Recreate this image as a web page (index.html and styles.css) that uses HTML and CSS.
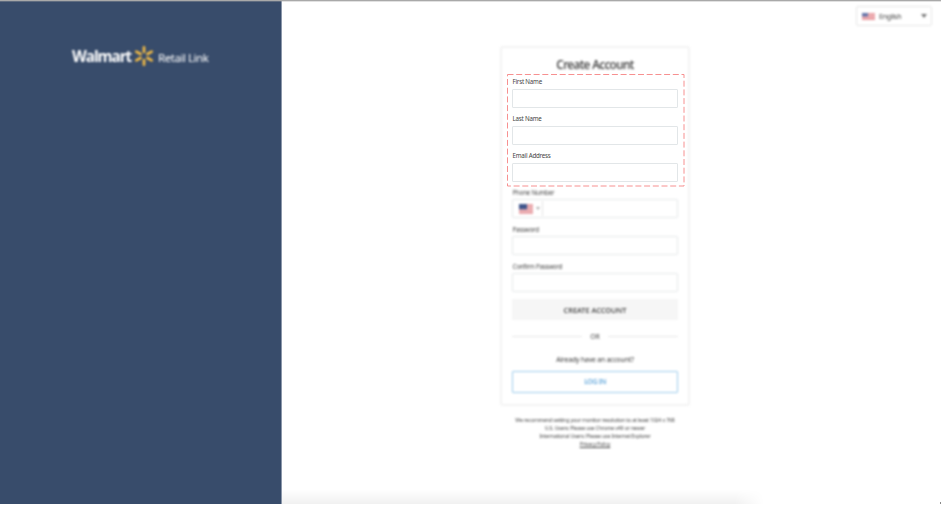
FILE: index.html
```html
<!DOCTYPE html>
<html lang="en">
<head>
<meta charset="utf-8">
<title>Create Account</title>
<link rel="stylesheet" href="styles.css">
</head>
<body>
<div class="page">
  <aside class="sidebar">
    <div class="brand">
      <span class="brand-name">Walmart</span>
      <svg class="spark" viewBox="0 0 20 20"><g stroke="#f3bb45" stroke-width="2.7" stroke-linecap="round"><path d="M10 1.3V6M10 14v4.7M2.3 5.6l4.2 2.4M13.5 12l4.2 2.4M2.3 14.4L6.5 12M13.5 8l4.2-2.4"/></g></svg>
      <span class="brand-product">Retail Link</span>
    </div>
  </aside>
  <main class="content">
    <div class="language soft">
      <svg class="flag" viewBox="0 0 13 8" preserveAspectRatio="none"><path fill="#e89a9e" d="M0 0h13v8H0z"/><path stroke="#f2c5c7" stroke-width=".6" d="M0 1.5h13M0 3h13M0 4.5h13M0 6h13"/><path fill="#6475aa" d="M0 0h6v4H0z"/></svg>
      <span class="language-name">English</span>
      <span class="arrow"></span>
    </div>
    <form class="card">
      <h1 class="title soft">Create Account</h1>
      <div class="group">
        <svg class="outline" viewBox="0 0 178 113"><path stroke="#f79090" stroke-dasharray="6 2.7" fill="none" d="M.5.5h176.500v111.500H.5z"/></svg>
        <div class="field"><label>First Name</label><div class="input"></div></div>
        <div class="field"><label>Last Name</label><div class="input"></div></div>
        <div class="field"><label>Email Address</label><div class="input"></div></div>
      </div>
      <div class="soft">
        <div class="field"><label>Phone Number</label>
          <div class="input phone">
            <svg class="flag" viewBox="0 0 13 10" preserveAspectRatio="none"><path fill="#e9a4a8" d="M0 0h13v10H0z"/><path stroke="#efc3c5" stroke-width=".6" d="M0 2h13M0 4h13M0 6h13M0 8h13"/><path fill="#3f558c" d="M0 0h7.500v5.300H0z"/></svg>
            <span class="arrow small"></span><span class="divider"></span>
          </div>
        </div>
        <div class="field"><label>Password</label><div class="input"></div></div>
        <div class="field"><label>Confirm Password</label><div class="input"></div></div>
        <div class="submit">CREATE ACCOUNT</div>
        <div class="or"><span>OR</span></div>
        <div class="question">Already have an account?</div>
        <div class="login">LOG IN</div>
      </div>
    </form>
    <footer class="notes soft">
      <div>We recommend setting your monitor resolution to at least 1024 x 768</div>
      <div>U.S. Users: Please use Chrome v49 or newer</div>
      <div>International Users: Please use Internet Explorer</div>
      <div><u>Privacy Policy</u></div>
    </footer>
    <div class="shade"></div>
  </main>
  <i class="corner"></i>
</div>
</body>
</html>
```
FILE: styles.css
```css
* { box-sizing: border-box; }
body { margin: 0; background: #fff; font-family: "Noto Sans", "Open Sans", sans-serif; font-size: 6.2px; color: #444; }
.page { position: relative; display: flex; width: 941px; height: 505px; overflow: hidden; border-top: 1px solid #a9a9a9; }
.page::before { content: ""; position: absolute; top: 0; left: 0; right: 0; height: 1px; background: rgba(170, 170, 170, .35); }
.soft { filter: blur(.8px); }
.sidebar { width: 282px; height: 503px; background: #384c6b; border-right: 1px solid #8b97aa; }
.brand { display: flex; align-items: center; height: 22px; margin: 44px 0 0 72px; color: #fff; white-space: nowrap; filter: blur(.8px); }
.brand-name { width: 59px; font: bold 15.3px/22px "Open Sans", sans-serif; letter-spacing: -1.05px; }
.spark { width: 20px; height: 20px; margin: 0 4px 0 3px; }
.brand-product { font: 11.5px/22px "Noto Sans", sans-serif; margin-top: 4px; letter-spacing: -.45px; color: #fff; }
.content { position: relative; flex: 1; height: 504px; display: flex; flex-direction: column; }
.language { align-self: flex-end; display: flex; align-items: center; width: 76px; height: 20px; margin: 5px 9px 0 0; padding: 0 4px 0 5px; border: 1px solid #e6e6e6; border-radius: 2px; }
.flag { width: 13px; height: 7px; flex: none; }
.language-name { margin-left: 4px; font-size: 7.2px; line-height: 18px; padding-bottom: 1px; letter-spacing: -.3px; color: #444; }
.arrow { margin-left: auto; border: 3px solid transparent; border-top: 4px solid #777; border-bottom: 0; }
.card { position: relative; width: 190px; height: 360px; margin: 20px 0 0 218px; padding: 10px 12px 0; }
.card::before { content: ""; position: absolute; inset: 0; border: 2px solid #f3f3f3; border-radius: 3px; filter: blur(.8px); }
.title { margin: 0; height: 18px; font-size: 11.8px; line-height: 17px; font-weight: 500; text-align: center; letter-spacing: -.62px; color: #333; white-space: nowrap; }
.group { position: relative; }
.outline { position: absolute; left: -5px; top: 0; width: 178px; height: 113px; }
.field { height: 36.750px; padding-top: 1px; }
label { display: block; height: 14px; line-height: 14.500px; padding-left: .500px; letter-spacing: -.22px; white-space: nowrap; color: #444; }
.input { height: 19px; border: 1px solid #e2e6e8; border-radius: 1px; }
.soft label { line-height: 15px; }
.soft .input { border-color: #e6e9ea; }
.phone { display: flex; align-items: center; padding-left: 6px; }
.phone .flag { width: 14px; height: 10px; }
.arrow.small { margin-left: 3px; border-width: 3px 2px 0; border-top-color: #aaa; }
.divider { width: 1px; height: 15px; margin-left: 2px; background: #e4e4e4; }
.submit { height: 21px; margin-top: 4px; background: #f6f6f6; text-align: center; line-height: 22px; font-size: 7.400px; font-weight: 500; color: #333; }
.or { display: flex; align-items: center; gap: 8px; height: 14px; margin-top: 10px; font-size: 6.8px; color: #444; }
.or::before, .or::after { content: ""; flex: 1; height: 1px; background: #e6e6e6; }
.question { height: 14px; line-height: 15px; margin-top: 8px; font-size: 6.7px; letter-spacing: -.08px; text-align: center; color: #333; }
.login { height: 22px; line-height: 19px; margin-top: 5.500px; border: 1px solid #9bcbec; border-radius: 1px; text-align: center; font-size: 6.800px; letter-spacing: -.2px; color: #1b7fcb; }
.notes { width: 190px; margin: 9.500px 0 0 218px; text-align: center; font-size: 5.200px; line-height: 8.200px; letter-spacing: -.15px; white-space: nowrap; color: #444; }
.shade { position: absolute; left: 0; top: 488px; width: 482px; height: 15px; background: linear-gradient(rgba(0,0,0,0), rgba(0,0,0,.055)); -webkit-mask-image: linear-gradient(90deg, #000 94%, transparent); }
.corner { position: absolute; right: 0; bottom: 1px; width: 1px; height: 2px; background: #888; }
```
